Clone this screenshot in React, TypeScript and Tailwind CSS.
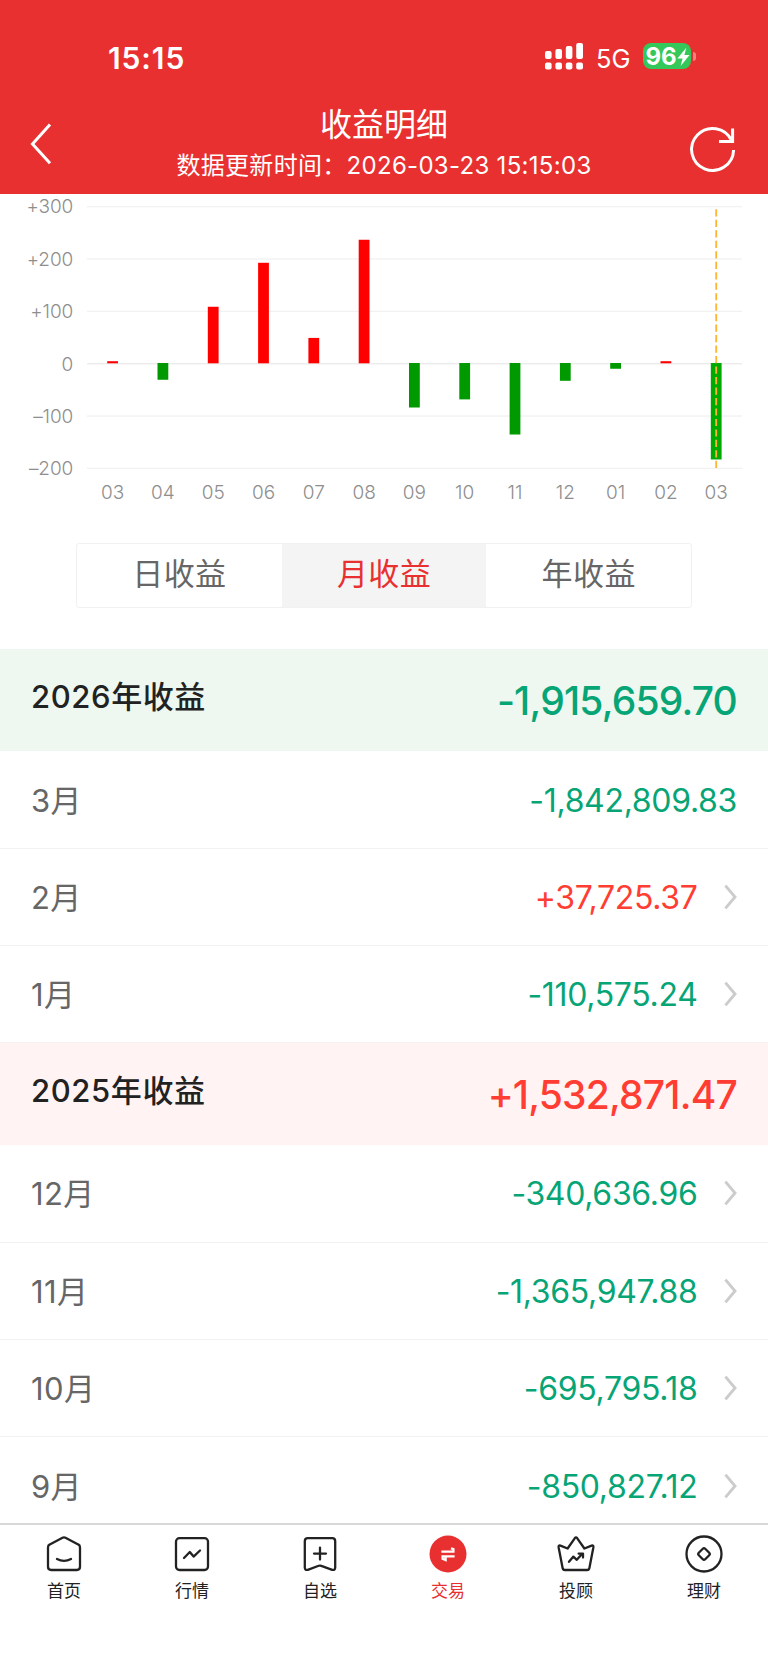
import React from "react";

type Tone = "up" | "down";

const MONTH_BARS: { label: string; value: number }[] = [
  { label: "03", value: 4 },
  { label: "04", value: -32 },
  { label: "05", value: 108 },
  { label: "06", value: 192 },
  { label: "07", value: 48.5 },
  { label: "08", value: 236 },
  { label: "09", value: -85 },
  { label: "10", value: -69.5 },
  { label: "11", value: -136.6 },
  { label: "12", value: -34 },
  { label: "01", value: -11 },
  { label: "02", value: 4 },
  { label: "03", value: -184.3 },
];

const TICKS = [
  { label: "+300", value: 300 },
  { label: "+200", value: 200 },
  { label: "+100", value: 100 },
  { label: "0", value: 0 },
  { label: "–100", value: -100 },
  { label: "–200", value: -200 },
];

const ZERO_Y = 169.3;
const UNIT = 0.5235;
const yOf = (v: number) => ZERO_Y + 0.4 - v * UNIT;
const xOf = (i: number) => 112.6 + i * 50.3;

function ProfitChart() {
  return (
    <svg width="768" height="349" viewBox="0 0 768 349" className="block shrink-0 bg-white font-light" fill="#8e8e8e" fontSize="19">
      {TICKS.map((t) => (
        <g key={t.label}>
          <rect x="87" y={yOf(t.value) - 0.7} width="655" height="1.4" fill={t.value === 0 ? "#ececec" : "#f2f2f2"} />
          <text x="73.2" y={yOf(t.value) + 6.8} textAnchor="end" letterSpacing="-0.1">
            {t.label}
          </text>
        </g>
      ))}
      {MONTH_BARS.map((b, i) => (
        <g key={i}>
          <rect
            x={xOf(i) - 5.4}
            y={b.value > 0 ? yOf(b.value) - 0.4 : ZERO_Y - 0.3}
            width="10.8"
            height={Math.abs(b.value) * UNIT}
            fill={b.value > 0 ? "#ff0000" : i === 12 ? "#00aa00" : "#009900"}
          />
          <text x={xOf(i)} y="304.6" textAnchor="middle">
            {b.label}
          </text>
        </g>
      ))}
      <line x1="716.2" x2="716.2" y1="15.3" y2="274" stroke="#ffb432" strokeWidth="1.8" strokeDasharray="7.2 3.28" />
    </svg>
  );
}

function StatusBar() {
  return (
    <div className="flex h-[100px] items-start pt-[38px] pl-[108px]">
      <div className="w-[437px] text-[30px] leading-[40px] font-semibold tracking-[0.9px]">15:15</div>
      <svg width="38" height="27" viewBox="0 0 38 27" fill="#fff" className="mt-[5px]">
        <rect x="0" y="8" width="6.6" height="8" rx="2" />
        <rect x="10.4" y="6" width="6.6" height="10" rx="2" />
        <rect x="20.8" y="3" width="6.6" height="13" rx="2" />
        <rect x="31.2" y="0" width="6.8" height="16" rx="2" />
        <rect x="0" y="19.5" width="6.6" height="7" rx="2" />
        <rect x="10.4" y="19.5" width="6.6" height="7" rx="2" />
        <rect x="20.8" y="19.5" width="6.6" height="7" rx="2" />
        <rect x="31.2" y="19.5" width="6.8" height="7" rx="2" />
      </svg>
      <div className="ml-[13px] w-[46.5px] text-[25.5px] leading-[41px]">5G</div>
      <div className="mt-[5px] flex h-[26px] w-[48.5px] items-center rounded-[8px] bg-[#34c759] pl-[3px]">
        <span className="mt-[1px] text-[24px] leading-[26px] font-bold">96</span>
        <svg width="13" height="20" viewBox="0 0 13 20" fill="#fff" className="mt-[1px] shrink-0">
          <path d="M9.3 0.8 0.4 11.6h5.2L3.6 19l9-10.9H7.4z" />
        </svg>
      </div>
      <div className="mt-[14px] ml-[2px] h-[9px] w-[3px] rounded-r-full bg-white/40" />
    </div>
  );
}

function Header() {
  return (
    <header className="h-[194.4px] shrink-0 bg-[#e83030] text-white">
      <StatusBar />
      <div className="flex h-[94px]">
        <svg width="130" height="94" viewBox="0 0 130 94" fill="none" stroke="#fff" strokeWidth="3">
          <path d="M50 24.6 32.5 44 50 63.2" />
        </svg>
        <div className="flex flex-1 flex-col items-center">
          <h1 className="mt-[5px] text-[32px] leading-[40px] font-normal">收益明细</h1>
          <p className="mt-[1px] text-[24px] leading-[40px] tracking-[0.3px] whitespace-nowrap">数据更新时间：2026-03-23 15:15:03</p>
        </div>
        <svg width="130" height="94" viewBox="638 100 130 94" fill="none" stroke="#fff" strokeWidth="3">
          <path d="M733.6 150A21 21 0 1 1 731.6 140.5" />
          <path d="M732.6 128.5V141.5H719" />
        </svg>
      </div>
    </header>
  );
}

function Tabs() {
  const base = "flex h-full flex-1 items-center justify-center pb-[3px] text-[31px] leading-[40px] tracking-[0.4px]";
  return (
    <div className="mx-[76px] flex h-[65px] shrink-0 overflow-hidden rounded-[3px] border border-[#f1f1f1]">
      <div className={base + " text-[#666666]"}>日收益</div>
      <div className={base + " bg-[#f4f4f4] text-[#e83030]"}>月收益</div>
      <div className={base + " text-[#666666]"}>年收益</div>
    </div>
  );
}

function YearRow({ label, amount, tone }: { label: string; amount: string; tone: Tone }) {
  const bg = tone === "down" ? "bg-[#eef8f0]" : "bg-[#fff4f3]";
  const fg = tone === "down" ? "text-[#07a576]" : "text-[#ff3d33]";
  return (
    <div className={"flex h-[102px] shrink-0 justify-between pr-[31px] pl-[31px] font-medium " + bg}>
      <span className="mt-[27.5px] text-[31px] leading-[40px] tracking-[0.6px] text-[#222222]">{label}</span>
      <span className={"mt-[32px] text-[39px] leading-[40px] tracking-[-0.8px] " + fg}>{amount}</span>
    </div>
  );
}

function MonthRow({ label, amount, tone, plain, last }: { label: string; amount: string; tone: Tone; plain?: boolean; last?: boolean }) {
  return (
    <div className={"flex h-[97.3px] shrink-0 items-center pt-[2px] pr-[31px] pl-[31px] " + (last ? "" : "border-b-[1.5px] border-[#f2f2f2]")}>
      <span className="flex-1 text-[31px] leading-[40px] tracking-[0.4px] text-[#666666]">{label}</span>
      <span className={"text-[32px] leading-[40px] tracking-[-0.32px] " + (tone === "down" ? "text-[#07a576]" : "text-[#ff3d33]")}>{amount}</span>
      {!plain && (
        <svg width="13" height="26" viewBox="0 0 13 26" fill="none" stroke="#cccccc" strokeWidth="2.9" className="mb-[2px] ml-[26.5px]">
          <path d="M1.4 1.6 11 13 1.4 24.4" />
        </svg>
      )}
    </div>
  );
}

function NavItem({ label, active, children }: { label: string; active?: boolean; children: React.ReactNode }) {
  return (
    <div className={"flex flex-1 flex-col items-center pt-[8px] " + (active ? "text-[#e83030]" : "text-[#222222]")}>
      <svg width="42" height="42" viewBox="0 0 42 42" fill="none" stroke="currentColor" strokeWidth="2.3" strokeLinecap="round" strokeLinejoin="round">
        {children}
      </svg>
      <span className="mt-[3px] text-[17px] leading-[26px]">{label}</span>
    </div>
  );
}

function BottomNav() {
  return (
    <nav className="flex h-[146px] shrink-0 border-t-2 border-[#d8d8d8] bg-white">
      <NavItem label="首页">
        <path d="M5 14.2Q5 12.2 6.8 11.4L19.5 4.8Q21 4 22.5 4.8L35.2 11.4Q37 12.2 37 14.2V33.8Q37 37 33.8 37H8.2Q5 37 5 33.8Z" />
        <path d="M14 26Q21 29.6 28 26" />
      </NavItem>
      <NavItem label="行情">
        <rect x="5" y="5.2" width="32" height="31.8" rx="3.4" />
        <path d="M13 25 18.8 19 22.6 23.6 29 17.5" />
      </NavItem>
      <NavItem label="自选">
        <path d="M5.8 8.2Q5.8 5.2 8.8 5.2H33.2Q36.2 5.2 36.2 8.2V34.5Q36.2 37.6 33.2 36.8L22.3 32.8Q21 32.3 19.7 32.8L8.8 36.8Q5.8 37.6 5.8 34.5Z" />
        <path d="M21 14.6v12M15 20.6h12" />
      </NavItem>
      <NavItem label="交易" active>
        <circle cx="21" cy="21" r="18.5" fill="currentColor" stroke="none" />
        <path d="M14.4 18.6H26.4V16.2L24 15.4M27.6 23.4H15.6V25.8L18.6 27V24" stroke="#fff" strokeLinecap="butt" strokeLinejoin="miter" />
      </NavItem>
      <NavItem label="投顾">
        <path d="M7.6 35 3.6 14.2Q3.4 12 5.4 12.6L12.6 15.5 19.9 5.1Q21 3.8 22.1 5.1L29.4 15.5 36.6 12.6Q38.6 12 38.4 14.2L34.4 35Q34 37 32.2 37H9.8Q8 37 7.6 35Z" />
        <path d="M14 28.8 18.4 23.6 21.8 26.8 27 21M23.6 20.6H28V24.5" />
      </NavItem>
      <NavItem label="理财">
        <circle cx="21" cy="21" r="17.5" />
        <path d="M19.8 15.8Q21 14.6 22.2 15.8L26.2 19.8Q27.4 21 26.2 22.2L22.2 26.2Q21 27.4 19.8 26.2L15.8 22.2Q14.6 21 15.8 19.8Z" />
      </NavItem>
    </nav>
  );
}

export default function App() {
  return (
    <div className="flex h-[1669px] w-[768px] flex-col overflow-hidden bg-white font-['Inter','Noto_Sans_CJK_SC',sans-serif]">
      <Header />
      <ProfitChart />
      <Tabs />
      <main className="mt-[41px] flex h-[873.6px] shrink-0 flex-col overflow-hidden">
        <YearRow label="2026年收益" amount="-1,915,659.70" tone="down" />
        <MonthRow label="3月" amount="-1,842,809.83" tone="down" plain />
        <MonthRow label="2月" amount="+37,725.37" tone="up" />
        <MonthRow label="1月" amount="-110,575.24" tone="down" />
        <YearRow label="2025年收益" amount="+1,532,871.47" tone="up" />
        <MonthRow label="12月" amount="-340,636.96" tone="down" />
        <MonthRow label="11月" amount="-1,365,947.88" tone="down" />
        <MonthRow label="10月" amount="-695,795.18" tone="down" />
        <MonthRow label="9月" amount="-850,827.12" tone="down" last />
      </main>
      <BottomNav />
    </div>
  );
}
